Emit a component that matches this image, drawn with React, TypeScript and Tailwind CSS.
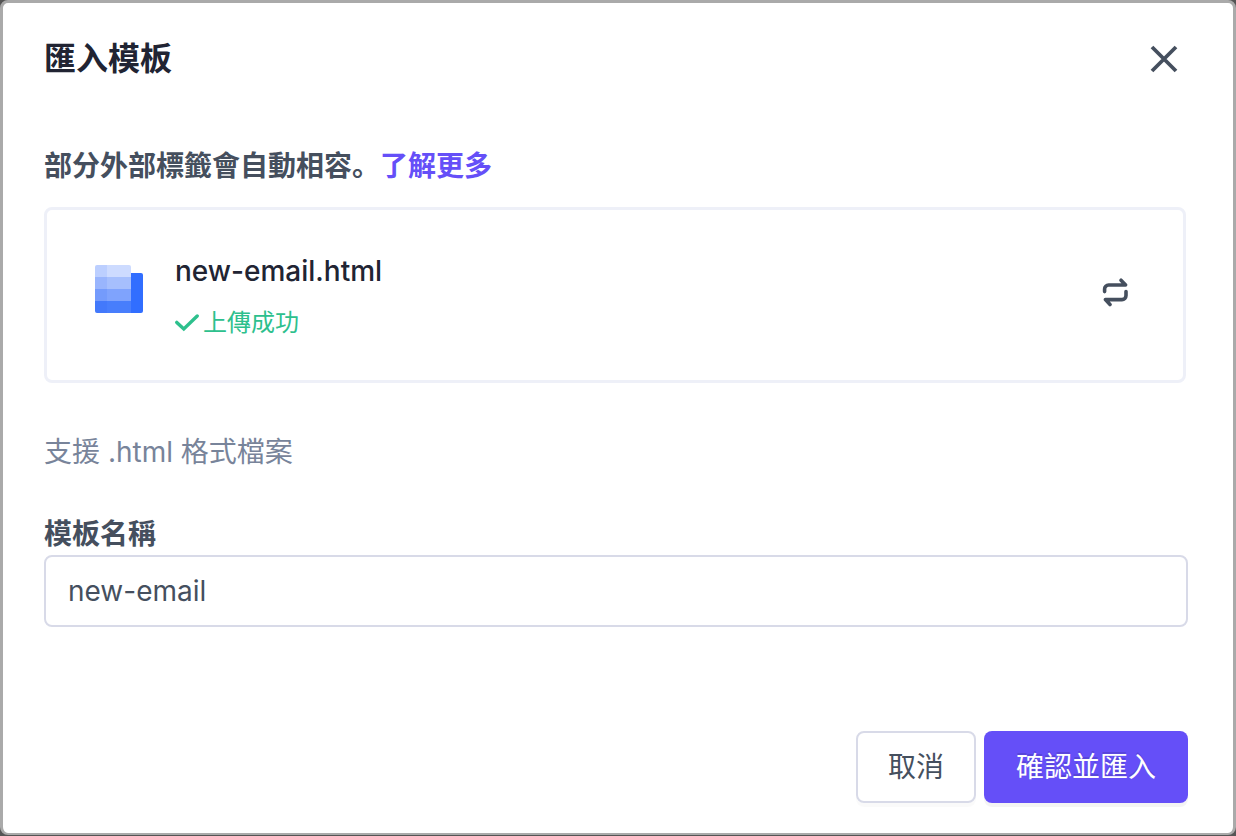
import { useState } from "react";

function CloseIcon() {
  return (
    <svg width="28" height="28" viewBox="0 0 28 28" fill="none" stroke="currentColor" strokeWidth="3.8" aria-hidden="true">
      <path d="M2 2l24 24M26 2L2 26" />
    </svg>
  );
}

function FileIcon() {
  return (
    <svg className="mt-3.5 shrink-0" width="48" height="48" viewBox="0 0 48 48" aria-hidden="true">
      <path d="M34 8h12a2 2 0 0 1 2 2v36a2 2 0 0 1-2 2H34z" fill="#316eff" />
      <path d="M0 12V2a2 2 0 0 1 2-2h10v12z" fill="#bccfff" />
      <path d="M12 12V0h22a2 2 0 0 1 2 2v10z" fill="#cddbff" />
      <path d="M0 12h12v12H0z" fill="#99b5fd" />
      <path d="M12 12h24v12H12z" fill="#a6bffd" />
      <path d="M0 24h12v12H0z" fill="#749bfc" />
      <path d="M12 24h24v12H12z" fill="#7fa3fd" />
      <path d="M0 36h12v12H2a2 2 0 0 1-2-2z" fill="#4379fb" />
      <path d="M12 36h24v12H12z" fill="#487efc" />
    </svg>
  );
}

function CheckIcon() {
  return (
    <svg width="24" height="20" viewBox="0 0 24 20" fill="none" stroke="currentColor" strokeWidth="3.4" strokeLinecap="round" aria-hidden="true">
      <path d="M1.8 9.4l7 6.6L22.2 3" />
    </svg>
  );
}

function SwapIcon() {
  return (
    <svg width="28" height="30" viewBox="0 0 28 30" fill="none" stroke="currentColor" strokeWidth="3.6" strokeLinecap="round" strokeLinejoin="round" aria-hidden="true">
      <path d="M3.6 14.6V12a4 4 0 0 1 4-4H24.600L20 3.200" />
      <path d="M25 14.600V18.600a4 4 0 0 1-4 4H4.400L9 27.500" />
    </svg>
  );
}

export default function App() {
  const [name, setName] = useState("new-email");

  return (
    <div className="min-h-screen bg-[#555] pb-px font-['Inter','Noto_Sans_CJK_SC',sans-serif] text-[28px] leading-10 text-[#454f5e]">
      <div role="dialog" aria-labelledby="dialog-title" className="rounded-lg border-3 border-b-2 border-[#aaa] bg-white pt-8 pr-[45px] pb-[30px] pl-[41px]">
        <header className="flex items-center justify-between">
          <h1 id="dialog-title" className="text-[32px] font-bold text-[#212433]">匯入模板</h1>
          <button type="button" aria-label="關閉" className="flex size-12 items-center justify-center">
            <CloseIcon />
          </button>
        </header>

        <p className="mt-[63px] font-bold">
          部分外部標籤會自動相容。<a href="#learn-more" className="text-[#654ff8]">了解更多</a>
        </p>

        <div className="mt-[21px] mr-0.5 flex items-start rounded-lg border-3 border-[#eef0f8] px-12 pt-[41px] pb-[37px]">
          <FileIcon />
          <div className="ml-8 flex-1">
            <div className="font-medium text-[#212433]">new-email.html</div>
            <div className="mt-3 flex items-center gap-1 text-2xl/10 text-[#2dc08d]">
              <CheckIcon />
              上傳成功
            </div>
          </div>
          <button type="button" aria-label="重新上傳" className="mt-[21px] flex size-10 items-center justify-center">
            <SwapIcon />
          </button>
        </div>

        <p className="mt-[49px] text-[#78849a]">支援 .html 格式檔案</p>

        <label htmlFor="template-name" className="mt-[42px] block font-bold">模板名稱</label>
        <input
          id="template-name"
          type="text"
          value={name}
          onChange={(e) => setName(e.target.value)}
          className="mt-px block h-[72px] w-full rounded-lg border-2 border-[#d8dae8] px-[22px] outline-none"
        />

        <footer className="mt-[104px] flex justify-end gap-2">
          <button type="button" className="h-[72px] rounded-lg border-2 border-[#d8dae8] px-[30px] shadow-[0_4px_0_rgba(0,0,0,0.02)]">
            取消
          </button>
          <button type="button" className="h-[72px] rounded-lg bg-[#654ff8] px-8 text-white shadow-[0_4px_0_rgba(0,0,0,0.045)] [text-shadow:0_-2px_0_rgba(0,0,0,0.12)]">
            確認並匯入
          </button>
        </footer>
      </div>
    </div>
  );
}
